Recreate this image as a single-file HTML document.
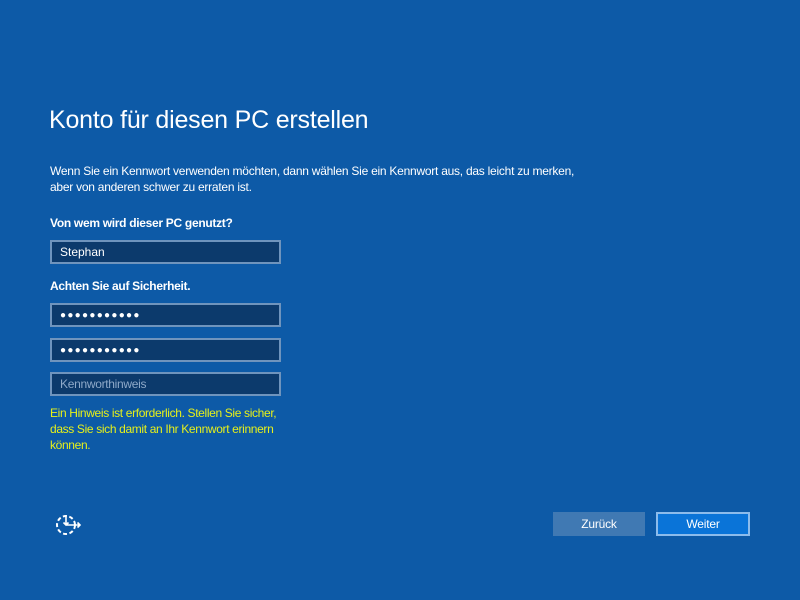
<!DOCTYPE html>
<html><head><meta charset="utf-8"><style>
body{margin:0;width:800px;height:600px;background:#0d5aa7;font-family:"Liberation Sans",sans-serif;color:#fff;position:relative;overflow:hidden}
.a{position:absolute}
h1{position:absolute;left:49px;top:106px;margin:0;font-weight:normal;font-size:25px;letter-spacing:-0.2px}
.p{left:50px;top:163px;font-size:12px;line-height:16px;letter-spacing:-0.25px}
.l{font-size:12px;font-weight:bold;left:50px;letter-spacing:-0.3px}
.in{position:absolute;left:50px;height:20px;background:#0c3a6c;border:2px solid #6f94bd;font-size:12px;line-height:20px;padding-left:8px;width:219px}
.dots{font-size:10px;letter-spacing:1.3px;line-height:22px}
.hint{left:50px;top:405px;font-size:12px;line-height:16px;color:#e6f01a;letter-spacing:-0.35px}
.btn{position:absolute;top:512px;height:24px;font-size:12px;line-height:24px;text-align:center;box-sizing:border-box;letter-spacing:-0.2px}
</style></head><body>
<h1>Konto für diesen PC erstellen</h1>
<div class="a p">Wenn Sie ein Kennwort verwenden möchten, dann wählen Sie ein Kennwort aus, das leicht zu merken,<br>aber von anderen schwer zu erraten ist.</div>
<div class="a l" style="top:216px">Von wem wird dieser PC genutzt?</div>
<div class="in" style="top:240px">Stephan</div>
<div class="a l" style="top:279px">Achten Sie auf Sicherheit.</div>
<div class="in dots" style="top:303px">●●●●●●●●●●●</div>
<div class="in dots" style="top:338px">●●●●●●●●●●●</div>
<div class="in" style="top:372px;color:#8ea9c9;letter-spacing:-0.3px">Kennworthinweis</div>
<div class="a hint">Ein Hinweis ist erforderlich. Stellen Sie sicher,<br>dass Sie sich damit an Ihr Kennwort erinnern<br>können.</div>
<svg class="a" style="left:54px;top:512px" width="30" height="26" viewBox="0 0 30 26">
<circle cx="12" cy="13" r="9" fill="none" stroke="#fff" stroke-width="2" stroke-dasharray="4 2.5"/>
<path d="M12 3v10M9.5 10.5l2.5 2.5 2.5-2.5M12 13h14M23.5 10.5l2.5 2.5-2.5 2.5" fill="none" stroke="#fff" stroke-width="1.6"/>
</svg>
<div class="btn" style="left:553px;width:92px;background:#4079b3">Zurück</div>
<div class="btn" style="left:656px;width:94px;background:#0a74d8;border:2px solid #8cbcec;line-height:20px">Weiter</div>
</body></html>
